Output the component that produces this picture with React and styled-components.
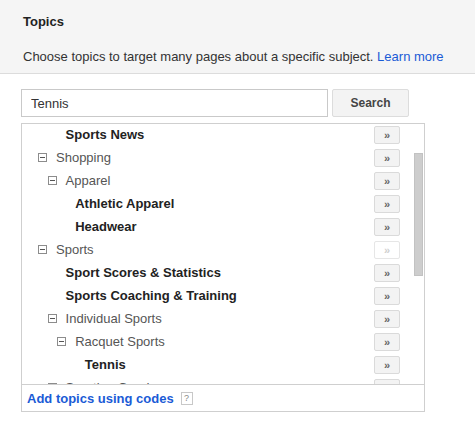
import React from "react";
import styled, { createGlobalStyle } from "styled-components";

const GlobalStyle = createGlobalStyle`
  html, body {
    margin: 0;
    padding: 0;
    background: #fff;
    font-family: "Liberation Sans", Arial, sans-serif;
    font-size: 13px;
    color: #222;
  }
`;

const rows = [
  { label: "Sports News", level: 1, leaf: true },
  { label: "Shopping", level: 0 },
  { label: "Apparel", level: 1 },
  { label: "Athletic Apparel", level: 2, leaf: true },
  { label: "Headwear", level: 2, leaf: true },
  { label: "Sports", level: 0, disabled: true },
  { label: "Sport Scores & Statistics", level: 1, leaf: true },
  { label: "Sports Coaching & Training", level: 1, leaf: true },
  { label: "Individual Sports", level: 1 },
  { label: "Racquet Sports", level: 2 },
  { label: "Tennis", level: 3, leaf: true },
  { label: "Sporting Goods", level: 1 },
];

function Topics() {
  return (
    <>
      <GlobalStyle />
      <Wrapper>
        <Header>
          <Title>Topics</Title>
          <Desc>
            Choose topics to target many pages about a specific subject.{" "}
            <a href="#">Learn more</a>
          </Desc>
        </Header>
        <Body>
          <SearchRow>
            <SearchInput defaultValue="Tennis" />
            <SearchButton>Search</SearchButton>
          </SearchRow>
          <Panel>
            <ListView>
              <ListInner>
                {rows.map((r) => (
                  <Row key={r.label}>
                    <Label $level={r.level}>
                      {r.leaf ? <Spacer /> : <Expander />}
                      <Name $leaf={r.leaf}>{r.label}</Name>
                    </Label>
                    <AddButton $disabled={r.disabled}>»</AddButton>
                  </Row>
                ))}
              </ListInner>
              <ScrollThumb />
            </ListView>
            <Footer>
              <FooterLink href="#">Add topics using codes</FooterLink>
              <Help>?</Help>
            </Footer>
          </Panel>
        </Body>
      </Wrapper>
    </>
  );
}

const Wrapper = styled.div`
  width: 475px;
  height: 422px;
  overflow: hidden;
`;

const Header = styled.div`
  background: #f5f5f5;
  border-bottom: 1px solid #dcdcdc;
  height: 74px;
  box-sizing: border-box;
  padding: 14px 23px 0;
`;

const Title = styled.div`
  font-weight: bold;
  color: #222;
  line-height: 16px;
`;

const Desc = styled.div`
  margin-top: 19px;
  line-height: 16px;
  color: #333;
  a {
    color: #1a5bd6;
    text-decoration: none;
  }
`;

const Body = styled.div`
  padding: 15px 0 0 21px;
`;

const SearchRow = styled.div`
  display: flex;
  gap: 4px;
`;

const SearchInput = styled.input`
  width: 307px;
  height: 28px;
  box-sizing: border-box;
  border: 1px solid #c9c9c9;
  padding: 0 9px;
  font-family: inherit;
  font-size: 13px;
  color: #333;
  outline: none;
`;

const SearchButton = styled.button`
  width: 77px;
  height: 28px;
  box-sizing: border-box;
  background: #f3f3f3;
  border: 1px solid #dcdcdc;
  border-radius: 2px;
  font-family: inherit;
  font-size: 12px;
  font-weight: bold;
  color: #444;
`;

const Panel = styled.div`
  margin-top: 6px;
  width: 404px;
  height: 289px;
  box-sizing: border-box;
  border: 1px solid #cfcfcf;
  display: flex;
  flex-direction: column;
`;

const ListView = styled.div`
  position: relative;
  height: 260px;
  overflow: hidden;
  border-bottom: 1px solid #cfcfcf;
`;

const ListInner = styled.div`
  margin-top: -1px;
`;

const Row = styled.div`
  display: flex;
  align-items: center;
  height: 23px;
  padding-right: 24px;
`;

const Label = styled.div`
  flex: 1;
  display: flex;
  align-items: center;
  padding-left: ${(p) => 16 + p.$level * 9.6}px;
`;

const Expander = styled.span`
  position: relative;
  width: 9px;
  height: 9px;
  box-sizing: border-box;
  border: 1px solid #8c8c8c;
  margin-right: 9px;
  &::after {
    content: "";
    position: absolute;
    left: 1px;
    right: 1px;
    top: 3px;
    height: 1px;
    background: #555;
  }
`;

const Spacer = styled.span`
  width: 9px;
  margin-right: 9px;
`;

const Name = styled.span`
  color: ${(p) => (p.$leaf ? "#222" : "#555")};
  font-weight: ${(p) => (p.$leaf ? "bold" : "normal")};
  white-space: nowrap;
`;

const AddButton = styled.button`
  width: 26px;
  height: 18px;
  box-sizing: border-box;
  padding: 0;
  background: ${(p) => (p.$disabled ? "#fff" : "#f3f3f3")};
  border: 1px solid ${(p) => (p.$disabled ? "#e6e6e6" : "#dadada")};
  border-radius: 2px;
  font-family: inherit;
  font-size: 11px;
  font-weight: bold;
  line-height: 14px;
  color: ${(p) => (p.$disabled ? "#cfcfcf" : "#666")};
`;

const ScrollThumb = styled.div`
  position: absolute;
  right: 1px;
  top: 29px;
  width: 9px;
  height: 123px;
  box-sizing: border-box;
  background: #cdcdcd;
  border: 1px solid #c2c2c2;
`;

const Footer = styled.div`
  flex: 1;
  display: flex;
  align-items: center;
  padding-left: 5px;
  gap: 7px;
`;

const FooterLink = styled.a`
  color: #1a5bd6;
  font-weight: bold;
  text-decoration: none;
`;

const Help = styled.span`
  width: 12px;
  height: 13px;
  box-sizing: border-box;
  border: 1px solid #c8c8c8;
  font-size: 9px;
  line-height: 11px;
  text-align: center;
  color: #888;
`;

export default Topics;
